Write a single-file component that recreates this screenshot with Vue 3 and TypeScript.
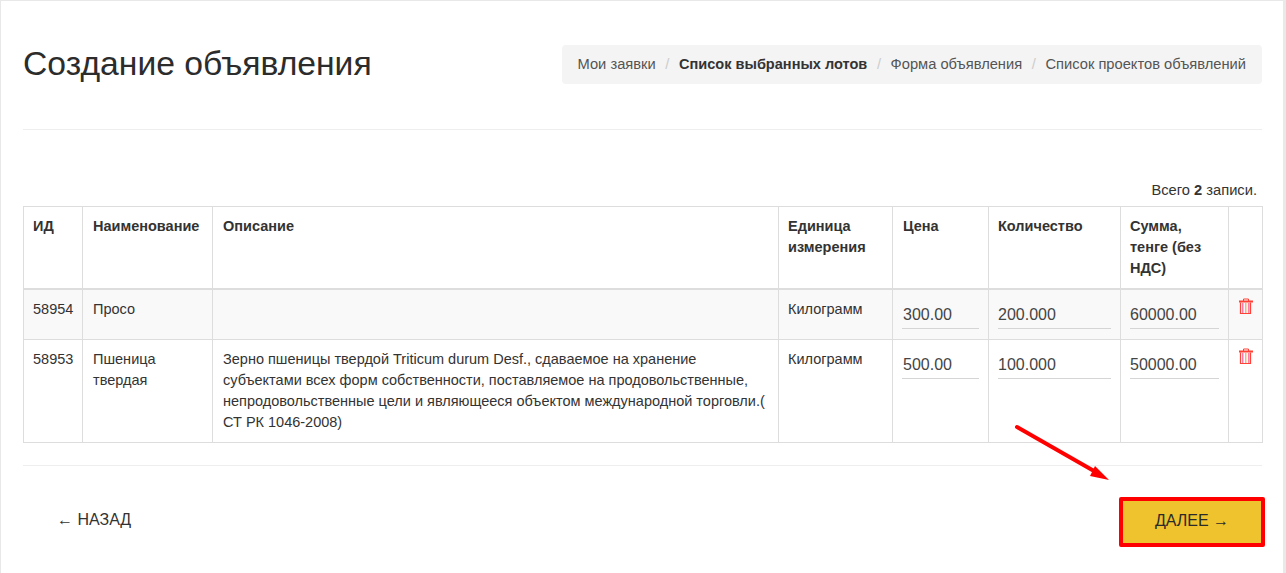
<script setup lang="ts">
interface Row { id: string; name: string; desc: string; unit: string; price: string; qty: string; sum: string }
const crumbs = [
  { t: 'Мои заявки', b: false },
  { t: 'Список выбранных лотов', b: true },
  { t: 'Форма объявления', b: false },
  { t: 'Список проектов объявлений', b: false },
]
const rows: Row[] = [
  { id: '58954', name: 'Просо', desc: '', unit: 'Килограмм', price: '300.00', qty: '200.000', sum: '60000.00' },
  { id: '58953', name: 'Пшеница твердая', desc: 'Зерно пшеницы твердой Triticum durum Desf., сдаваемое на хранение субъектами всех форм собственности, поставляемое на продовольственные, непродовольственные цели и являющееся объектом международной торговли.( СТ РК 1046-2008)', unit: 'Килограмм', price: '500.00', qty: '100.000', sum: '50000.00' },
]
const widths = [59, 130, 566, 114, 96, 132, 108, 34]
</script>

<template>
  <div class="page">
    <div class="card">
      <header class="head">
        <h1>Создание объявления</h1>
        <nav class="crumbs">
          <template v-for="(c, i) in crumbs" :key="c.t">
            <span v-if="i" class="sep">/</span>
            <span :class="{ bold: c.b }">{{ c.t }}</span>
          </template>
        </nav>
      </header>
      <hr class="line" />
      <p class="summary">Всего <b>2</b> записи.</p>
      <table>
        <colgroup>
          <col v-for="(w, i) in widths" :key="i" :style="{ width: w + 'px' }" />
        </colgroup>
        <thead>
          <tr>
            <th>ИД</th><th>Наименование</th><th>Описание</th><th>Единица измерения</th>
            <th>Цена</th><th>Количество</th><th>Сумма, тенге (без НДС)</th><th></th>
          </tr>
        </thead>
        <tbody>
          <tr v-for="r in rows" :key="r.id">
            <td>{{ r.id }}</td>
            <td>{{ r.name }}</td>
            <td>{{ r.desc }}</td>
            <td>{{ r.unit }}</td>
            <td><div class="inp">{{ r.price }}</div></td>
            <td><div class="inp">{{ r.qty }}</div></td>
            <td><div class="inp">{{ r.sum }}</div></td>
            <td class="act">
              <svg width="16" height="17" viewBox="0 0 16 17">
                <path d="M5.500 3V1h5V3" fill="none" stroke="#ff4136" stroke-width="1" />
                <rect x="1" y="2.500" width="14" height="2" fill="#ff4136" />
                <path d="M4 5h1.500v10H4z" fill="#ff7fa8" />
                <path d="M7 5h1.500v10H7z" fill="#ffb46e" />
                <path d="M10 5h1.500v10H10z" fill="#ff7fa8" />
                <path d="M2.500 4.500V15.500h10V4.500" fill="none" stroke="#ff4136" stroke-width="1.200" />
              </svg>
            </td>
          </tr>
        </tbody>
      </table>
      <hr class="line bottom" />
      <footer class="foot">
        <a class="back">← НАЗАД</a>
        <a class="next">ДАЛЕЕ →</a>
      </footer>
    </div>
    <svg class="arrow" width="110" height="70" viewBox="0 0 110 70">
      <path d="M3 3 L80 47" stroke="#f00" stroke-width="4" stroke-linecap="round" fill="none" />
      <path d="M95 56 L76 52 L81 42 Z" fill="#f00" />
    </svg>
  </div>
</template>

<style>
html, body { margin: 0; background: #fff; }
</style>

<style scoped>
.page {
  position: relative;
  width: 1286px;
  height: 573px;
  overflow: hidden;
  background: #e9e9e9;
  font-family: "Liberation Sans", Arial, sans-serif;
  font-size: 14.500px;
  line-height: 21px;
  color: #333;
}
.card {
  box-sizing: border-box;
  width: 1283px;
  height: 573px;
  background: #fff;
  border-top: 1px solid #e8e8e8;
  border-left: 1px solid #e8e8e8;
  padding: 0 21px 0 22px;
}
.head {
  display: flex;
  justify-content: space-between;
  align-items: center;
  padding-top: 43px;
  height: 40px;
}
h1 {
  margin: 0 0 2px;
  font-size: 33.700px;
  font-weight: 400;
  line-height: 40px;
  color: #2c2c2c;
}
.crumbs {
  display: flex;
  align-items: center;
  height: 39px;
  box-sizing: border-box;
  padding: 0 16px;
  background: #f4f4f4;
  border-radius: 4px;
  color: #555;
  font-size: 14.700px;
}
.sep { color: #ccc; padding: 0 9.600px; }
.bold { font-weight: 700; color: #333; font-size: 14.550px; }
.line {
  margin: 45px 0 0;
  border: 0;
  border-top: 1px solid #eee;
}
.summary {
  margin: 50px 0 0;
  text-align: right;
  padding-right: 5px;
  line-height: 20px;
  font-size: 14.700px;
}
table {
  width: 1239px;
  margin-top: 6px;
  table-layout: fixed;
  border-collapse: collapse;
  border: 1px solid #ddd;
}
th, td {
  border: 1px solid #ddd;
  padding: 9px;
  text-align: left;
  vertical-align: top;
}
th:nth-child(2), td:nth-child(2),
th:nth-child(3), td:nth-child(3),
th:nth-child(5), td:nth-child(5),
td:nth-child(8) { padding-left: 10px; }
th { font-weight: 700; border-bottom-width: 2px; }
tbody tr:nth-child(odd) { background: #f9f9f9; }
.inp {
  height: 29px;
  box-sizing: border-box;
  margin: 1px 0 1px;
  padding-top: 3px;
  font-size: 16px;
  line-height: 24px;
  border-bottom: 1px solid #d5d5d5;
  color: #444;
}
td:nth-child(5) .inp { margin-left: -1px; padding-left: 1px; }
.act svg { display: block; margin-top: -1px; margin-left: -1px; }
.bottom { margin-top: 22px; }
.foot {
  display: flex;
  justify-content: space-between;
  align-items: center;
  padding-top: 31px;
  font-size: 16px;
}
.back { margin: 0 0 5px 34px; color: #333; }
.next {
  box-sizing: border-box;
  width: 146px;
  height: 50px;
  margin-right: -3px;
  padding-bottom: 4px;
  display: flex;
  align-items: center;
  justify-content: center;
  background: #eec32d;
  border: 4px solid #f00;
  border-radius: 2px;
  color: #2a2a2a;
}
.arrow { position: absolute; left: 1014px; top: 424px; }
</style>
